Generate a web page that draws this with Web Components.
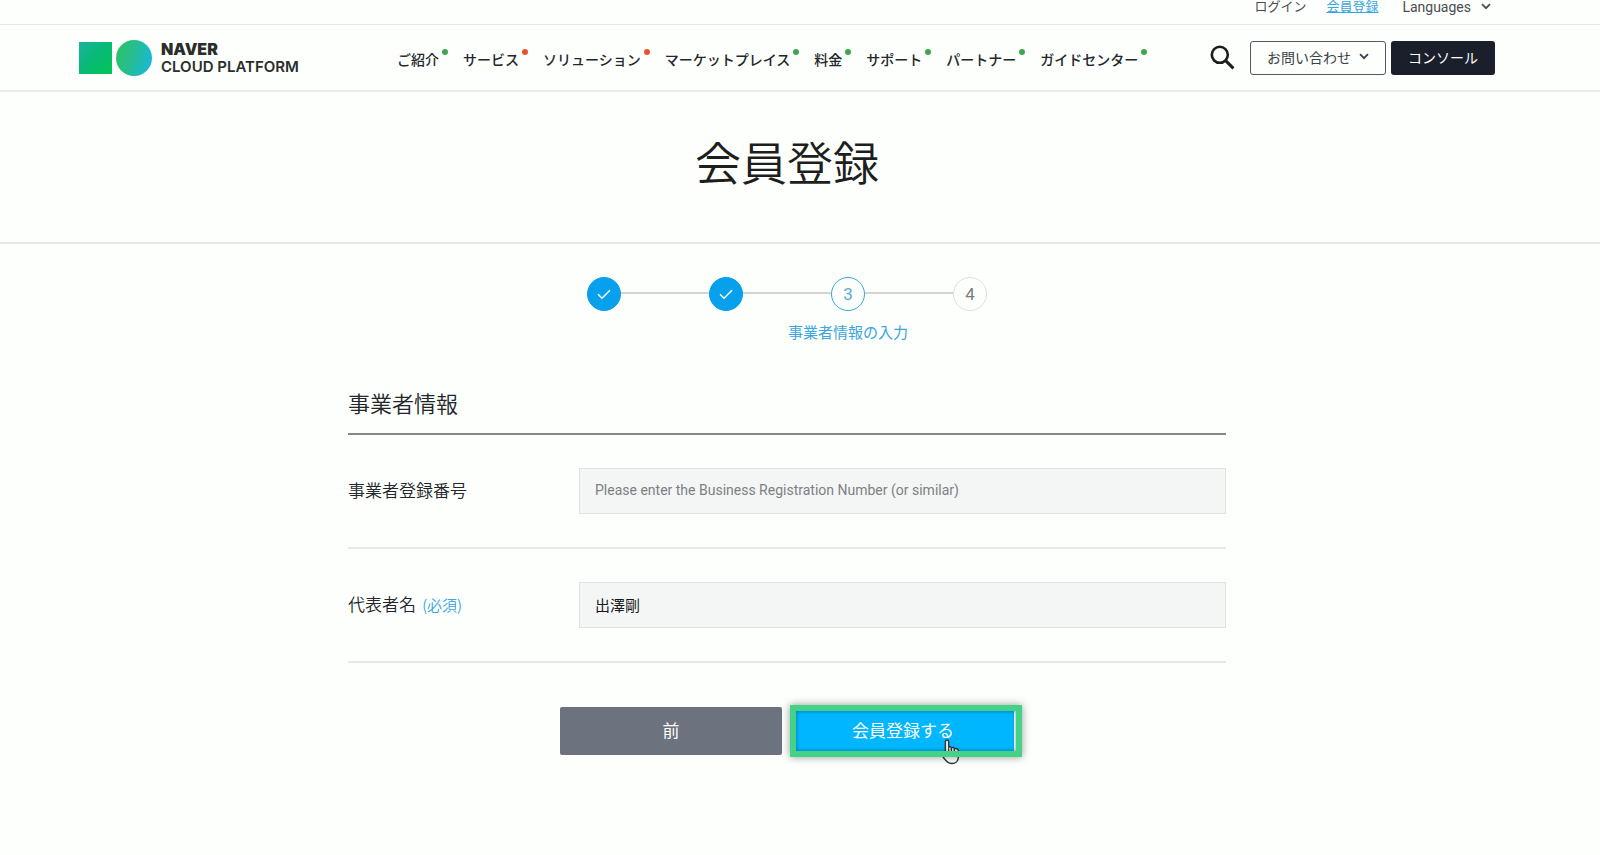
<!DOCTYPE html>
<html lang="ja">
<head>
<meta charset="utf-8">
<meta name="viewport" content="width=device-width, initial-scale=1">
<title>会員登録</title>
<style>
    body {
        --line: #e6e8e6;
        --blue: #07a0ec;
        --link: #3aa5e0;
        --ink: #23262b;
        --gutter: 26px;
        background-color: #fdfffc;
        color: var(--ink);
        font-family: Roboto, "Noto Sans CJK JP", sans-serif;
        margin: 0;
    }
</style>
</head>
<body>

<top-bar></top-bar>

<site-header>
    <nav-item slot="nav" dot="green">ご紹介</nav-item>
    <nav-item slot="nav" dot="red">サービス</nav-item>
    <nav-item slot="nav" dot="red">ソリューション</nav-item>
    <nav-item slot="nav" dot="green">マーケットプレイス</nav-item>
    <nav-item slot="nav" dot="green">料金</nav-item>
    <nav-item slot="nav" dot="green">サポート</nav-item>
    <nav-item slot="nav" dot="green">パートナー</nav-item>
    <nav-item slot="nav" dot="green">ガイドセンター</nav-item>
</site-header>

<page-title>会員登録</page-title>

<signup-form>
    <step-list slot="steps" count="4" current="3" label="事業者情報の入力"></step-list>
    <span slot="heading">事業者情報</span>
    <form-row name="number" label="事業者登録番号" placeholder="Please enter the Business Registration Number (or similar)"></form-row>
    <form-row name="owner" label="代表者名" note="(必須)" value="出澤剛"></form-row>
    <form-button slot="actions" kind="back">前</form-button>
    <form-button slot="actions" kind="submit" highlight>会員登録する</form-button>
</signup-form>

<script>
const chevron = `<svg class="chevron" viewBox="0 0 10 7" width="10" height="7" aria-hidden="true"><path d="M1 1.2L5 5.2L9 1.2" fill="none" stroke="currentColor" stroke-width="1.8"/></svg>`;

class TopBar extends HTMLElement {

    constructor() {
        super();
        this.shadow = this.attachShadow({mode: 'open'});
        this.render();
    }

    render() {

        this.shadow.innerHTML =
        `
        <style>
            :host{
                border-bottom: 1px solid var(--line);
                display: block;
                height: 24px;
                overflow: hidden;
                padding-right: var(--gutter);
            }

            .links{
                align-items: center;
                box-sizing: border-box;
                display: flex;
                gap: 20px;
                height: 13px;
                justify-content: flex-end;
                margin: 0 auto;
                max-width: 1416px;
                padding-right: 4px;
            }

            a, button{
                background: none;
                border: 0;
                color: #4a4d50;
                font-family: inherit;
                font-size: 13px;
                line-height: 20px;
                padding: 0;
                text-decoration: none;
            }

            a.current{
                color: var(--link);
                text-decoration: underline;
            }

            button{
                align-items: center;
                display: flex;
                font-size: 14px;
                gap: 10px;
                margin-left: 4px;
            }
        </style>

        <div class="links">
            <a href="#">ログイン</a>
            <a href="#" class="current">会員登録</a>
            <button type="button">Languages ${chevron}</button>
        </div>
        `;
    }
}

customElements.define('top-bar', TopBar);


class SiteHeader extends HTMLElement {

    constructor() {
        super();
        this.shadow = this.attachShadow({mode: 'open'});
        this.render();
    }

    render() {

        this.shadow.innerHTML =
        `
        <style>
            :host{
                border-bottom: 2px solid #e9ebe9;
                display: block;
                padding-right: var(--gutter);
            }

            header{
                align-items: center;
                display: flex;
                height: 65px;
                margin: 0 auto;
                max-width: 1416px;
            }

            .logo{
                align-items: center;
                color: #2b2d2c;
                display: flex;
                flex: none;
                font-family: Inter, sans-serif;
                font-size: 15px;
                font-weight: 600;
                gap: 9px;
                line-height: 18px;
                text-decoration: none;
                width: 226px;
            }

            .logo span{
                white-space: nowrap;
            }

            .logo b{
                display: block;
                font-size: 16px;
                font-weight: 900;
            }

            nav{
                display: flex;
                flex: 1;
                gap: 24px;
                padding: 5px 0 0 92px;
            }

            .tools{
                align-items: center;
                display: flex;
                gap: 5px;
            }

            .tools button{
                align-items: center;
                border-radius: 3px;
                box-sizing: border-box;
                display: flex;
                font-family: inherit;
                font-size: 14px;
                gap: 8px;
                height: 34px;
                justify-content: center;
                padding: 0 0 2px;
            }

            .tools .search{
                background: none;
                border: 0;
                color: #1d1d1d;
                margin-right: 10px;
                padding: 0;
            }

            .contact{
                background: none;
                border: 1px solid #55585c;
                color: #3c4048;
                width: 136px;
            }

            .console{
                background-color: #1a1f2b;
                border: 0;
                color: #fff;
                width: 104px;
            }
        </style>

        <header>
            <a class="logo" href="#">
                <svg width="73" height="36" viewBox="0 0 73 36" aria-hidden="true">
                    <defs>
                        <linearGradient id="square" x1="0" y1="0" x2="1" y2="1">
                            <stop offset="0" stop-color="#1bb3a0"/>
                            <stop offset=".45" stop-color="#08b978"/>
                            <stop offset="1" stop-color="#02c655"/>
                        </linearGradient>
                        <linearGradient id="circle" x1="0" y1=".35" x2="1" y2=".65">
                            <stop offset="0" stop-color="#2dc168"/>
                            <stop offset=".5" stop-color="#25bd98"/>
                            <stop offset="1" stop-color="#18b8da"/>
                        </linearGradient>
                    </defs>
                    <rect y="2" width="33" height="32" fill="url(#square)"/>
                    <circle cx="55" cy="18" r="18" fill="url(#circle)"/>
                </svg>
                <span><b>NAVER</b>CLOUD PLATFORM</span>
            </a>

            <nav><slot name="nav"></slot></nav>

            <div class="tools">
                <button class="search" type="button" aria-label="検索">
                    <svg width="25" height="25" viewBox="0 0 25 25" fill="none" stroke="currentColor"><circle cx="9.8" cy="9.8" r="8" stroke-width="2.6"/><path d="M15.6 15.6L23.4 23.4" stroke-width="3"/></svg>
                </button>
                <button class="contact" type="button">お問い合わせ ${chevron}</button>
                <button class="console" type="button">コンソール</button>
            </div>
        </header>
        `;
    }
}

customElements.define('site-header', SiteHeader);


class NavItem extends HTMLElement {

    constructor() {
        super();
        this.shadow = this.attachShadow({mode: 'open'});
        this.render();
    }

    render() {

        this.shadow.innerHTML =
        `
        <style>
            :host{
                display: block;
                position: relative;
            }

            a{
                color: var(--ink);
                font-size: 14px;
                font-weight: 500;
                line-height: 20px;
                text-decoration: none;
                white-space: nowrap;
            }

            :host::after{
                background-color: #3fa650;
                border-radius: 50%;
                content: "";
                height: 6px;
                position: absolute;
                right: -9px;
                top: -1px;
                width: 6px;
            }

            :host([dot="red"])::after{
                background-color: #e8532f;
            }
        </style>

        <a href="#"><slot></slot></a>
        `;
    }
}

customElements.define('nav-item', NavItem);


class PageTitle extends HTMLElement {

    constructor() {
        super();
        this.shadow = this.attachShadow({mode: 'open'});
        this.render();
    }

    render() {

        this.shadow.innerHTML =
        `
        <style>
            :host{
                border-bottom: 2px solid var(--line);
                display: block;
                padding: 39px var(--gutter) 45px 0;
            }

            h1{
                color: #1c1e20;
                font-size: 46px;
                font-weight: 350;
                line-height: 66px;
                margin: 0;
                text-align: center;
            }
        </style>

        <h1><slot></slot></h1>
        `;
    }
}

customElements.define('page-title', PageTitle);


class SignupForm extends HTMLElement {

    constructor() {
        super();
        this.shadow = this.attachShadow({mode: 'open'});
        this.render();
    }

    render() {

        this.shadow.innerHTML =
        `
        <style>
            :host{
                display: block;
                padding: 33px var(--gutter) 100px 0;
            }

            form{
                margin: 0 auto;
                max-width: 878px;
            }

            h2{
                border-bottom: 2px solid #858886;
                font-size: 22px;
                font-weight: 350;
                line-height: 32px;
                margin: 43px 0 0;
                padding-bottom: 12px;
            }

            .actions{
                display: flex;
                gap: 10px;
                justify-content: center;
                margin-top: 44px;
            }
        </style>

        <form>
            <slot name="steps"></slot>
            <h2><slot name="heading"></slot></h2>
            <slot></slot>
            <div class="actions"><slot name="actions"></slot></div>
        </form>
        `;
    }
}

customElements.define('signup-form', SignupForm);


class StepList extends HTMLElement {

    constructor() {
        super();
        this.shadow = this.attachShadow({mode: 'open'});
        this.render();
    }

    step(number, current) {
        if (number < current) {
            return `<li class="done"><span><svg width="14" height="11" viewBox="0 0 14 11"><path d="M1 5.2L5 9.2L13 1.2" fill="none" stroke="#fff" stroke-width="1.5"/></svg></span></li>`;
        }
        if (number === current) {
            return `<li class="current" aria-current="step"><span>${number}</span><em>${this.getAttribute('label')}</em></li>`;
        }
        return `<li><span>${number}</span></li>`;
    }

    render() {

        const count = Number(this.getAttribute('count'));
        const current = Number(this.getAttribute('current'));
        let steps = '';

        for (let i = 1; i <= count; i++) {
            steps += this.step(i, current);
        }

        this.shadow.innerHTML =
        `
        <style>
            :host{
                display: block;
            }

            ol{
                display: flex;
                justify-content: center;
                list-style: none;
                margin: 0;
                padding: 0;
            }

            li{
                align-items: center;
                display: flex;
                flex-direction: column;
                height: 69px;
                position: relative;
                width: 122px;
            }

            /* connector from the previous circle */
            li + li::before{
                background-color: #d2d4d2;
                content: "";
                height: 2px;
                position: absolute;
                right: 78px;
                top: 15px;
                width: 88px;
            }

            span{
                align-items: center;
                border: 1px solid #dfe1df;
                border-radius: 50%;
                box-sizing: border-box;
                color: #7a7d80;
                display: flex;
                font-size: 17px;
                height: 34px;
                justify-content: center;
                width: 34px;
            }

            .done span{
                background-color: var(--blue);
                border-color: var(--blue);
            }

            .current span{
                border-color: var(--link);
                color: #5ea9d4;
            }

            em{
                color: var(--link);
                font-size: 15px;
                font-style: normal;
                line-height: 22px;
                margin-top: 11px;
                white-space: nowrap;
            }
        </style>

        <ol>${steps}</ol>
        `;
    }
}

customElements.define('step-list', StepList);


class FormRow extends HTMLElement {

    constructor() {
        super();
        this.shadow = this.attachShadow({mode: 'open'});
        this.render();
    }

    render() {

        const name = this.getAttribute('name');
        const note = this.getAttribute('note');

        this.shadow.innerHTML =
        `
        <style>
            :host{
                align-items: center;
                border-bottom: 2px solid var(--line);
                display: flex;
                padding: 33px 0;
            }

            label{
                flex: none;
                font-size: 17px;
                font-weight: 350;
                line-height: 24px;
                width: 231px;
            }

            small{
                color: var(--link);
                font-family: "Noto Sans CJK JP", sans-serif;
                font-size: 15px;
                margin-left: 2px;
            }

            input{
                background-color: #f4f6f6;
                border: 1px solid #dfe2df;
                border-radius: 0;
                box-sizing: border-box;
                color: #15171a;
                flex: 1;
                font-family: inherit;
                font-size: 15px;
                height: 46px;
                min-width: 0;
                padding: 0 15px 2px;
            }

            input::placeholder{
                color: #7c8083;
                font-size: 14px;
            }
        </style>

        <label for="${name}">${this.getAttribute('label')}${note ? ` <small>${note}</small>` : ''}</label>
        <input id="${name}" name="${name}" type="text" placeholder="${this.getAttribute('placeholder') || ''}" value="${this.getAttribute('value') || ''}">
        `;
    }
}

customElements.define('form-row', FormRow);


class FormButton extends HTMLElement {

    constructor() {
        super();
        this.shadow = this.attachShadow({mode: 'open'});
        this.render();
    }

    render() {

        const pointer = `
            <svg class="pointer" width="19" height="26" viewBox="0 0 20 28" aria-hidden="true"><path d="M4.5 17V2.8C4.5 .6 8 .6 8 2.8V9C8.5 7.8 11 8 11 9.8C11.8 8.7 14.2 9 14.2 10.8C15.5 9.7 18.5 10.5 18.5 12.5V19C18.5 23.5 15.5 26.5 11.5 26.5C7 26.5 4.5 23.5 1.5 18.5L1 17.5C2 16 3.5 16.5 4.5 17Z" fill="#fff" stroke="#33373b" stroke-width="1.6"/><path d="M8 9V14M11 9.8V14M14.2 10.8V14" stroke="#33373b" stroke-width="1.3"/></svg>
            <div class="frame"></div>`;

        this.shadow.innerHTML =
        `
        <style>
            :host{
                display: block;
                position: relative;
                width: 222px;
            }

            button{
                background-color: #6c727e;
                border: 0;
                border-radius: 2px;
                color: #fff;
                display: block;
                font-family: inherit;
                font-size: 17px;
                height: 48px;
                padding: 0 0 4px;
                width: 100%;
            }

            :host([kind="submit"]) button{
                background-color: #00b7ff;
            }

            .pointer{
                left: 149px;
                position: absolute;
                top: 32px;
            }

            .frame{
                border: 6px solid #43d287;
                bottom: -2px;
                box-shadow: 0 0 8px rgba(0, 0, 0, 0.4), inset 0 0 4px rgba(0, 0, 0, 0.4);
                left: -2px;
                pointer-events: none;
                position: absolute;
                right: -8px;
                top: -2px;
            }
        </style>

        <button type="${this.getAttribute('kind') === 'submit' ? 'submit' : 'button'}"><slot></slot></button>
        ${this.hasAttribute('highlight') ? pointer : ''}
        `;
    }
}

customElements.define('form-button', FormButton);
</script>
</body>
</html>
